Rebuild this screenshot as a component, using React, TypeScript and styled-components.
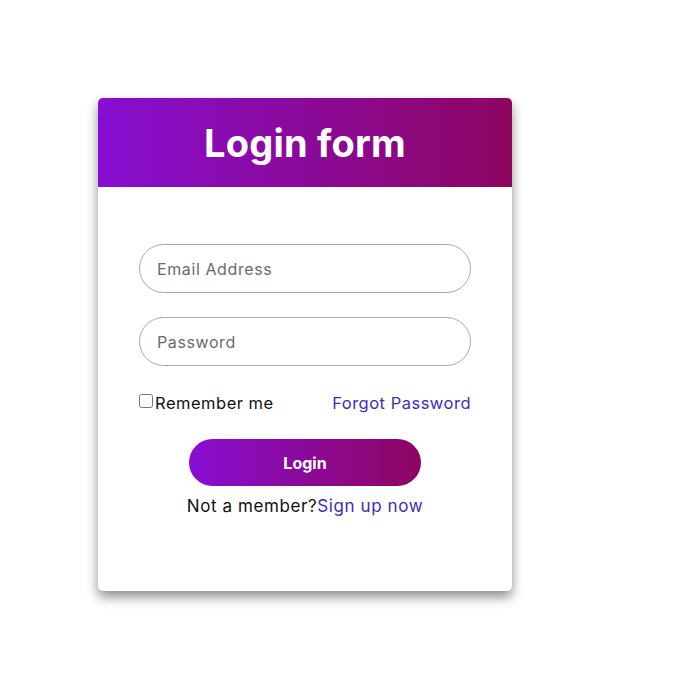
import React from 'react';
import styled, { createGlobalStyle } from 'styled-components';

const GlobalStyle = createGlobalStyle`
  html, body {
    margin: 0;
    padding: 0;
    background: #fff;
    font-family: Inter, "Noto Sans", Arial, sans-serif;
  }
`;

const Page = styled.div`
  min-height: 679px;
  box-sizing: border-box;
  padding: 98px 0 0 98px;
`;

const Card = styled.div`
  width: 414px;
  height: 493px;
  background: #fff;
  border-radius: 5px;
  overflow: hidden;
  box-shadow: 0 6px 12px rgba(0, 0, 0, 0.45);
  display: flex;
  flex-direction: column;
`;

const Header = styled.div`
  height: 89px;
  display: flex;
  align-items: center;
  justify-content: center;
  background: linear-gradient(to right, #870ed2, #8e0560);
`;

const Title = styled.h1`
  margin: 0;
  color: #fff;
  font-size: 38px;
  font-weight: 700;
  letter-spacing: 0.2px;
`;

const Form = styled.form`
  padding: 57px 41px 0 41px;
  display: flex;
  flex-direction: column;
`;

const Input = styled.input<{ $last?: boolean }>`
  box-sizing: border-box;
  height: 49px;
  width: 100%;
  border: 1px solid #a8a8a8;
  border-radius: 25px;
  padding: 0 17px;
  font-family: inherit;
  font-size: 16px;
  letter-spacing: 0.6px;
  color: #333;
  margin-bottom: ${(p) => (p.$last ? '26px' : '24px')};
  outline: none;
  &::placeholder {
    color: #6b6b6b;
  }
`;

const Options = styled.div`
  display: flex;
  justify-content: space-between;
  align-items: center;
  font-size: 16.5px;
  letter-spacing: 0.5px;
  height: 22px;
`;

const Remember = styled.label`
  display: flex;
  align-items: center;
  color: #111;
  input {
    margin: 0 2px 0 0;
    width: 14px;
    height: 14px;
    position: relative;
    top: -2px;
  }
`;

const Link = styled.a`
  color: #3a2fb8;
  text-decoration: none;
`;

const Button = styled.button`
  align-self: center;
  margin-top: 25px;
  width: 232px;
  height: 47px;
  border: none;
  border-radius: 24px;
  background: linear-gradient(to right, #870ed2, #8e0560);
  color: #fff;
  font-family: inherit;
  font-size: 16px;
  font-weight: 700;
`;

const Signup = styled.div`
  margin-top: 10px;
  text-align: center;
  font-size: 17px;
  letter-spacing: 0.6px;
  color: #111;
`;

export default function App() {
  return (
    <>
      <GlobalStyle />
      <Page>
        <Card>
          <Header>
            <Title>Login form</Title>
          </Header>
          <Form onSubmit={(e) => e.preventDefault()}>
            <Input type="email" placeholder="Email Address" />
            <Input type="password" placeholder="Password" $last />
            <Options>
              <Remember>
                <input type="checkbox" />
                Remember me
              </Remember>
              <Link href="#">Forgot Password</Link>
            </Options>
            <Button type="submit">Login</Button>
            <Signup>
              Not a member?<Link href="#">Sign up now</Link>
            </Signup>
          </Form>
        </Card>
      </Page>
    </>
  );
}
